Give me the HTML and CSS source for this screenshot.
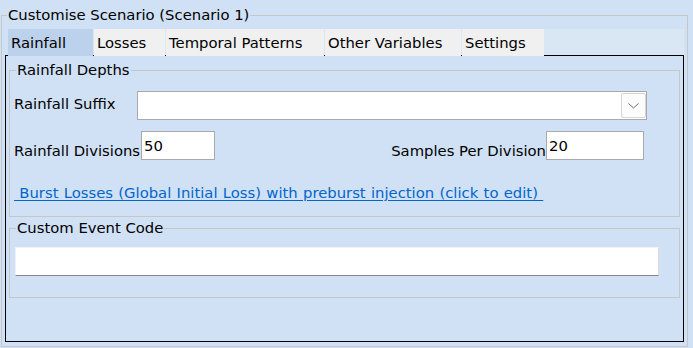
FILE: index.html
```html
<!DOCTYPE html>
<html lang="en">
<head>
  <meta charset="UTF-8">
  <title>Customise Scenario</title>
  <link rel="stylesheet" href="styles.css">
</head>
<body>
  <fieldset class="scenario">
    <legend>Customise Scenario (Scenario 1)</legend>

    <div class="tabs">
      <div class="tab active" style="width:85px">Rainfall</div>
      <div class="tab" style="width:71px">Losses</div>
      <div class="tab" style="width:158px">Temporal Patterns</div>
      <div class="tab" style="width:136px">Other Variables</div>
      <div class="tab" style="width:82px">Settings</div>
    </div>

    <div class="tab-page">
      <fieldset class="group depths">
        <legend>Rainfall Depths</legend>

        <div class="suffix-row">
          <label>Rainfall Suffix</label>
          <div class="combo">
            <span class="drop">
              <svg width="11" height="6" viewBox="0 0 11 6"><path d="M0.5 0.5 L5.5 5 L10.5 0.5" fill="none" stroke="#6d6d6d" stroke-width="1"/></svg>
            </span>
          </div>
        </div>

        <div class="divisions-row">
          <label>Rainfall Divisions</label>
          <input type="text" class="num" value="50">
          <label class="samples">Samples Per Division</label>
          <input type="text" class="num" value="20">
        </div>

        <a class="edit-link" href="#">&nbsp;Burst Losses (Global Initial Loss) with preburst injection (click to edit)&nbsp;</a>
      </fieldset>

      <fieldset class="group custom">
        <legend>Custom Event Code</legend>
        <input type="text" class="code-input">
      </fieldset>
    </div>
  </fieldset>
</body>
</html>
```

FILE: styles.css
```css
body {
  margin: 0;
  background: #d0e0f5;
  font-family: 'DejaVu Sans', sans-serif;
  font-size: 14.8px;
  line-height: 18px;
  color: #000;
}
fieldset {
  margin: 0;
  border: 1px solid #c6c6c6;
  min-inline-size: 0;
}
legend {
  padding: 0 1px;
  margin-left: 2px;
  line-height: 18px;
}
.scenario {
  margin: 6px 0 0 1px;
  width: 687px;
  box-sizing: border-box;
  padding: 5px 3px 4px 3px;
}
.tabs {
  display: flex;
  gap: 1px;
  height: 26px;
  margin-left: 3px;
  background: #d9e6f4;
}
.tab {
  position: relative;
  z-index: 1;
  height: 27px;
  box-sizing: border-box;
  padding: 5px 0 0 3px;
  background: #f0f0f0;
  white-space: nowrap;
}
.tab.active {
  background: #bcd1eb;
}
.tab-page {
  border: 1px solid #000;
  height: 287px;
  box-sizing: border-box;
}
.group {
  margin: 5px 3px 0 3px;
  padding: 0 0 0 4px;
}
.depths {
  padding-top: 12px;
  padding-bottom: 14px;
}
.suffix-row {
  display: flex;
  align-items: center;
}
.suffix-row label {
  width: 123px;
  padding-bottom: 3px;
}
.combo {
  width: 510px;
  height: 29px;
  box-sizing: border-box;
  border: 1px solid #a9a9a9;
  background: #fff;
  display: flex;
  justify-content: flex-end;
  padding: 1px 0;
}
.drop {
  width: 25px;
  height: 25px;
  box-sizing: border-box;
  border: 1px solid #d6d6d6;
  border-radius: 2px;
  background: #fcfcfc;
  display: flex;
  align-items: center;
  justify-content: center;
}
.divisions-row {
  display: grid;
  grid-template-columns: 127px 74px 1fr 98px;
  width: 630px;
  margin-top: 11px;
}
.divisions-row label {
  align-self: end;
  white-space: nowrap;
}
.divisions-row .samples {
  text-align: right;
}
input {
  font: inherit;
  color: #000;
  margin: 0;
  outline: none;
}
.num {
  height: 29px;
  box-sizing: border-box;
  border: 1px solid #a9a9a9;
  padding: 4px 2px 5px;
  line-height: 18px;
  width: 100%;
}
.edit-link {
  display: inline-block;
  margin-top: 24px;
  color: #0066cc;
  text-decoration: underline;
  text-underline-offset: 2px;
  word-spacing: 0.6px;
  white-space: nowrap;
}
.custom {
  margin-top: 2px;
  padding-top: 10px;
  padding-bottom: 21px;
}
.code-input {
  display: block;
  margin-left: 1px;
  width: 644px;
  height: 29px;
  box-sizing: border-box;
  background: #fff;
  border: 1px solid #f2f2f2;
  border-right-color: #dcdcdc;
  border-bottom-color: #858585;
  padding: 0 3px;
}
```
